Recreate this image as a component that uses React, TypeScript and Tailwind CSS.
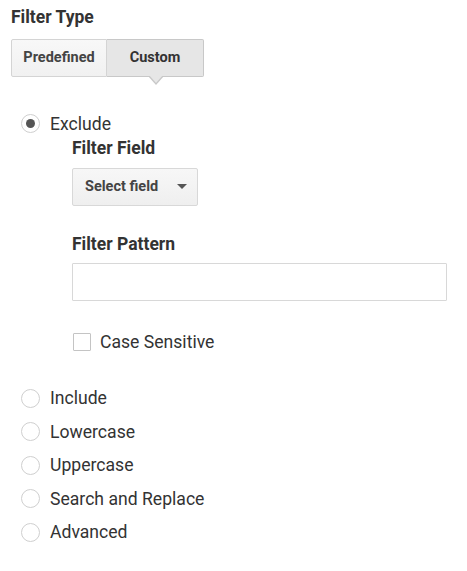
const font = { fontFamily: 'Roboto, "Noto Sans", Arial, sans-serif' };

function Radio({ label, checked = false }: { label: string; checked?: boolean }) {
  return (
    <label className="flex items-center h-[33.5px] cursor-pointer">
      <span className="ml-[21px] w-[19px] h-[19px] rounded-full border border-[#cfcfcf] bg-white flex items-center justify-center">
        {checked && <span className="w-[9px] h-[9px] rounded-full bg-[#555]" />}
      </span>
      <span className="ml-[10px] text-[17.6px] leading-[22px] text-[#333]">{label}</span>
    </label>
  );
}

export default function App() {
  return (
    <div className="w-[467px] h-[571px] bg-white text-[#333]" style={font}>
      <div className="pl-[11px] pt-[7px]">
        <h2 className="text-[17.5px] leading-[20px] font-bold text-[#333]">Filter Type</h2>

        <div className="mt-[12px] flex">
          <button className="w-[96px] h-[38px] border border-[#d4d4d4] rounded-l-[2px] bg-gradient-to-b from-[#f8f8f8] to-[#f1f1f1] text-[14.5px] font-bold text-[#444]">
            Predefined
          </button>
          <div className="relative">
            <button className="w-[97px] h-[38px] border border-l-0 border-[#c8c8c8] rounded-r-[2px] bg-[#e6e6e6] text-[14.5px] font-bold text-[#333]">
              Custom
            </button>
            <span className="absolute left-1/2 -translate-x-1/2 top-[37px] w-0 h-0 border-l-[8px] border-r-[8px] border-t-[9px] border-l-transparent border-r-transparent border-t-[#c8c8c8]" />
            <span className="absolute left-1/2 -translate-x-1/2 top-[36px] w-0 h-0 border-l-[7px] border-r-[7px] border-t-[8px] border-l-transparent border-r-transparent border-t-[#e6e6e6]" />
          </div>
        </div>
      </div>

      <div className="mt-[30px]">
        <Radio label="Exclude" checked />
      </div>

      <div className="pl-[72px]">
        <div className="text-[17.5px] leading-[20px] font-bold text-[#333] mt-[-3px]">Filter Field</div>
        <button className="mt-[10px] w-[126px] h-[38px] border border-[#d8d8d8] rounded-[2px] bg-gradient-to-b from-[#f7f7f7] to-[#efefef] flex items-center pl-[12px] pr-[10px]">
          <span className="text-[14.5px] font-bold text-[#444]">Select field</span>
          <span className="ml-auto w-0 h-0 border-l-[5px] border-r-[5px] border-t-[5px] border-l-transparent border-r-transparent border-t-[#555]" />
        </button>

        <div className="mt-[28px] text-[17.5px] leading-[20px] font-bold text-[#333]">Filter Pattern</div>
        <input className="mt-[9px] block w-[375px] h-[38px] border border-[#d8d8d8] rounded-[1px] bg-white outline-none px-2" />

        <label className="mt-[30px] flex items-center h-[22px]">
          <span className="ml-[1px] w-[18px] h-[18px] border border-[#c4c4c4] rounded-[1px] bg-white" />
          <span className="ml-[9px] text-[17.6px] leading-[22px] text-[#333]">Case Sensitive</span>
        </label>
      </div>

      <div className="mt-[29px]">
        <Radio label="Include" />
        <Radio label="Lowercase" />
        <Radio label="Uppercase" />
        <Radio label="Search and Replace" />
        <Radio label="Advanced" />
      </div>
    </div>
  );
}
